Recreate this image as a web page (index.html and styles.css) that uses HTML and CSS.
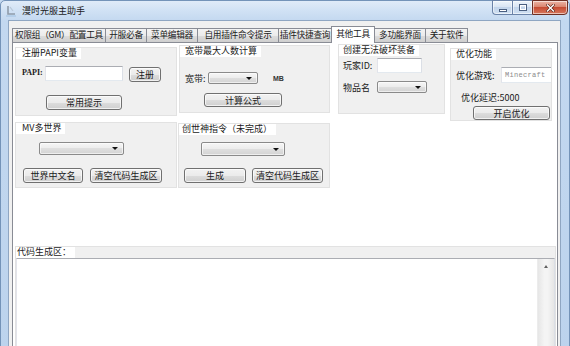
FILE: index.html
```html
<!DOCTYPE html>
<html>
<head>
<meta charset="utf-8">
<title>漫时光服主助手</title>
<link rel="stylesheet" href="styles.css">
</head>
<body>
<div class="window">
  <div class="titlebar">
    <svg class="app-icon" width="12" height="13" viewBox="0 0 12 13">
      <path d="M3 2 L3 10 L10 10" fill="none" stroke="#8f9cab" stroke-width="1.6"/>
      <path d="M5 3 L8 7" stroke="#b9c8d8" stroke-width="1.2"/>
      <path d="M1 12 H11" stroke="#9fc0e2" stroke-width="1"/>
    </svg>
    <span class="title">漫时光服主助手</span>
    <div class="caption">
      <div class="cbtn min"><span class="ico-min"></span></div>
      <div class="cbtn max"><span class="ico-max"></span></div>
      <div class="cbtn close">
        <svg width="9" height="8" viewBox="0 0 9 8">
          <path d="M1.5 1 L7.5 7 M7.5 1 L1.5 7" stroke="#5a2418" stroke-width="2.6" stroke-linecap="square"/>
          <path d="M1.5 1 L7.5 7 M7.5 1 L1.5 7" stroke="#ffffff" stroke-width="1.4" stroke-linecap="square"/>
        </svg>
      </div>
    </div>
  </div>
  <div class="client">
    <div class="tabs">
      <div class="tab t1">权限组（GM）配置工具</div>
      <div class="tab t2">开服必备</div>
      <div class="tab t3">菜单编辑器</div>
      <div class="tab t4">自用插件命令提示</div>
      <div class="tab t5">插件快捷查询</div>
      <div class="tab t6 sel">其他工具</div>
      <div class="tab t7">多功能界面</div>
      <div class="tab t8">关于软件</div>
    </div>
    <div class="page">
      <div class="row row1">
        <div class="gb gb1">
          <div class="gb-title">注册PAPI变量</div>
          <div class="line l-papi">
            <span class="lbl lbl-papi">PAPI:</span>
            <div class="input in-papi"></div>
            <div class="btn b-reg">注册</div>
          </div>
          <div class="line l-tips">
            <div class="btn b-tips">常用提示</div>
          </div>
        </div>
        <div class="gb gb2">
          <div class="gb-title">宽带最大人数计算</div>
          <div class="line l-bw">
            <span class="lbl lbl-bw">宽带:</span>
            <div class="combo cb-bw"></div>
            <span class="unit">MB</span>
          </div>
          <div class="line l-calc">
            <div class="btn b-calc">计算公式</div>
          </div>
        </div>
        <div class="gb gb3">
          <div class="gb-title">创建无法破坏装备</div>
          <div class="line l-pid">
            <span class="lbl lbl-w34">玩家ID:</span>
            <div class="input in-pid"></div>
          </div>
          <div class="line l-item">
            <span class="lbl lbl-w34">物品名</span>
            <div class="combo cb-item"></div>
          </div>
        </div>
        <div class="gb gb4">
          <div class="gb-title">优化功能</div>
          <div class="line l-game">
            <span class="lbl lbl-game">优化游戏:</span>
            <div class="input in-game"><span class="ph">Minecraft</span></div>
          </div>
          <div class="line l-delay">优化延迟:5000</div>
          <div class="line l-opt">
            <div class="btn b-opt">开启优化</div>
          </div>
        </div>
      </div>
      <div class="row row2">
        <div class="gb gb5">
          <div class="gb-title">MV多世界</div>
          <div class="line l-mvsel">
            <div class="combo cb-mv"></div>
          </div>
          <div class="line l-mvbtn">
            <div class="btn b-cn">世界中文名</div>
            <div class="btn b-clr1">清空代码生成区</div>
          </div>
        </div>
        <div class="gb gb6">
          <div class="gb-title">创世神指令（未完成）</div>
          <div class="line l-wesel">
            <div class="combo cb-we"></div>
          </div>
          <div class="line l-webtn">
            <div class="btn b-gen">生成</div>
            <div class="btn b-clr2">清空代码生成区</div>
          </div>
        </div>
      </div>
      <div class="gb code-box">
        <div class="gb-title">代码生成区：</div>
        <div class="code-area">
          <div class="code-text"></div>
          <div class="vscroll">
            <div class="sb-up"><span class="arrow-up"></span></div>
            <div class="sb-track"></div>
          </div>
        </div>
      </div>
    </div>
  </div>
</div>
</body>
</html>
```
FILE: styles.css
```css
* {
  box-sizing: border-box;
  margin: 0;
  padding: 0;
}

html, body {
  width: 570px;
  height: 346px;
  overflow: hidden;
}

body {
  font-family: "Noto Sans CJK SC", "Liberation Sans", sans-serif;
  font-size: 9px;
  color: #1a1a1a;
  background: #c5d9f0;
}

.window {
  width: 570px;
  height: 362px;
  display: flex;
  flex-direction: column;
  background: linear-gradient(180deg, #e0ebf8 0, #d0e1f4 10px, #c3d8f0 20px, #bcd3ed 100%);
  border: 1px solid #7493b8;
  border-radius: 5px 5px 0 0;
}

/* ---------- title bar ---------- */
.titlebar {
  height: 19px;
  flex: none;
  display: flex;
  align-items: center;
}

.app-icon {
  flex: none;
  margin-left: 4px;
}

.title {
  margin-left: 5px;
  font-size: 9px;
  line-height: 1;
  color: #1b1b1b;
  margin-top: -1px;
}

.caption {
  margin-left: auto;
  margin-right: 1px;
  margin-top: -1px;
  align-self: flex-start;
  display: flex;
  height: 15px;
}

.cbtn {
  height: 15px;
  border: 1px solid #6b83a8;
  display: flex;
  align-items: center;
  justify-content: center;
  background: linear-gradient(180deg, #eef4fb 0, #d9e5f3 45%, #c3d5eb 50%, #d0e0f2 100%);
  box-shadow: inset 0 0 0 1px rgba(255, 255, 255, 0.55);
}

.cbtn.min {
  width: 20px;
  border-right: none;
  border-radius: 0 0 0 4px;
}

.cbtn.max {
  width: 20px;
  border-right: none;
}

.cbtn.close {
  width: 36px;
  border-color: #6d2f24;
  border-radius: 0 0 4px 0;
  background: linear-gradient(180deg, #ecb5a6 0, #da856f 45%, #c64c33 50%, #d6785e 100%);
}

.ico-min {
  width: 8px;
  height: 3px;
  margin-top: 5px;
  background: #fff;
  border: 1px solid #4a5f80;
}

.ico-max {
  width: 8px;
  height: 7px;
  border: 1px solid #4a5f80;
  box-shadow: inset 0 0 0 1px #fff;
  background: transparent;
}

/* ---------- client & tabs ---------- */
.client {
  flex: 1;
  margin: 0 8px 0 7px;
  background: #f0f0f0;
  border: 1px solid #8fa6c2;
  padding: 5px 2px 0 3px;
  display: flex;
  flex-direction: column;
}

.tabs {
  height: 16px;
  flex: none;
  display: flex;
  align-items: flex-end;
  position: relative;
  z-index: 1;
}

.tab {
  height: 14px;
  margin-right: -1px;
  border: 1px solid #898c95;
  border-bottom: none;
  background: linear-gradient(180deg, #f3f3f3 0, #ebebeb 50%, #dddddd 50%, #cfcfcf 100%);
  display: flex;
  align-items: center;
  justify-content: center;
  white-space: nowrap;
  line-height: 1;
  font-size: 8.7px;
  letter-spacing: -0.3px;
}

.tab.sel {
  height: 17px;
  margin-bottom: -1px;
  background: #fff;
  position: relative;
  z-index: 2;
  padding-bottom: 1px;
}

.t1 { width: 94px; }
.t2 { width: 42px; }
.t3 { width: 52px; }
.t4 { width: 82px; }
.t5 { width: 54px; }
.t6 { width: 44px; }
.t7 { width: 52px; }
.t8 { width: 43px; }

.page {
  flex: 1;
  border: 1px solid #898c95;
  background: #fff;
  display: flex;
  flex-direction: column;
}

/* ---------- group boxes ---------- */
.row {
  display: flex;
  align-items: flex-start;
  flex: none;
}

.gb {
  background: #f0f0f0;
  border: 1px solid #e2e2e2;
  flex: none;
  display: flex;
  flex-direction: column;
  overflow: hidden;
}

.gb-title {
  align-self: flex-start;
  height: 12px;
  line-height: 12px;
  margin: -1px 0 0 -1px;
  padding: 0 4px 0 7px;
  background: #fff;
  white-space: nowrap;
}

.line {
  display: flex;
  align-items: center;
  flex: none;
  white-space: nowrap;
}

.lbl {
  flex: none;
  line-height: 1;
}

.btn {
  flex: none;
  border: 1px solid #707070;
  border-radius: 3px;
  background: linear-gradient(180deg, #f2f2f2 0, #ebebeb 50%, #dddddd 50%, #cfcfcf 100%);
  box-shadow: inset 0 0 0 1px rgba(255, 255, 255, 0.7);
  display: flex;
  align-items: center;
  justify-content: center;
  line-height: 1;
  height: 15px;
}

.input {
  flex: none;
  background: #fff;
  border: 1px solid;
  border-color: #abadb3 #dbdfe6 #e3e9ef #e2e3ea;
  height: 15px;
}

.combo {
  flex: none;
  border: 1px solid #8a8a8a;
  border-radius: 2px;
  background: linear-gradient(180deg, #f6f6f6 0, #ececec 50%, #dfdfdf 50%, #d3d3d3 100%);
  box-shadow: inset 0 0 0 1px rgba(255, 255, 255, 0.6);
  display: flex;
  justify-content: flex-end;
  align-items: center;
  padding-right: 5px;
}

.combo::after {
  content: "";
  width: 0;
  height: 0;
  border-left: 3px solid transparent;
  border-right: 3px solid transparent;
  border-top: 3px solid #111;
}

/* group 1 */
.gb1 { width: 162px; height: 69px; margin: 4px 0 0 2px; }
.gb1 .line { padding-left: 6px; }
.l-papi { margin-top: 7px; align-items: flex-start !important; }
.lbl-papi {
  width: 23px;
  margin-top: 3px;
  font-family: "Liberation Serif", serif;
  font-weight: bold;
  font-size: 8px;
}
.in-papi { width: 78px; }
.b-reg { width: 32px; margin-left: 6px; margin-top: 1px; }
.l-tips { margin-top: 13px; }
.b-tips { width: 76px; margin-left: 24px; }

/* group 2 */
.gb2 { width: 151px; height: 68px; margin: 2px 0 0 2px; }
.gb2 .gb-title { padding-left: 6px; }
.gb2 .line { padding-left: 5px; }
.l-bw { margin-top: 15px; }
.lbl-bw { width: 23px; }
.cb-bw { width: 50px; height: 12px; }
.unit {
  margin-left: 15px;
  font-size: 7px;
  font-weight: bold;
  color: #333;
  font-family: "Liberation Sans", sans-serif;
}
.l-calc { margin-top: 9px; }
.b-calc { width: 78px; height: 14px; margin-left: 19px; }

/* group 3 */
.gb3 { width: 107px; height: 70px; margin: 1px 0 0 8px; }
.gb3 .gb-title { padding-left: 5px; }
.gb3 .line { padding-left: 4px; }
.l-pid { margin-top: 2px; }
.lbl-w34 { width: 34px; }
.in-pid { width: 45px; }
.l-item { margin-top: 8px; }
.cb-item { width: 50px; height: 12px; }

/* group 4 */
.gb4 { width: 102px; height: 73px; margin: 5px 0 0 5px; }
.gb4 .gb-title { padding-left: 6px; }
.gb4 .line { padding-left: 5px; }
.l-game { margin-top: 7px; }
.lbl-game { width: 45px; }
.in-game {
  width: 64px;
  height: 16px;
  display: flex;
  align-items: center;
  padding-left: 3px;
}
.ph {
  font-family: "Liberation Mono", monospace;
  font-size: 7px;
  color: #8c8c8c;
  letter-spacing: 0.3px;
}
.l-delay {
  margin-top: 8px;
  height: 12px;
  padding-left: 10px !important;
}
.l-opt { margin-top: 3px; }
.b-opt { width: 77px; height: 14px; margin-left: 17px; }

/* group 5 */
.gb5 { width: 162px; height: 66px; margin: 1px 0 0 2px; }
.gb5 .line { padding-left: 6px; }
.l-mvsel { margin-top: 8px; }
.cb-mv { width: 85px; height: 13px; margin-left: 17px; }
.l-mvbtn { margin-top: 13px; }
.b-cn { width: 60px; margin-left: 1px; }
.b-clr1 { width: 72px; margin-left: 7px; }

/* group 6 */
.gb6 { width: 152px; height: 65px; margin: 2px 0 0 1px; }
.gb6 .gb-title { padding-left: 4px; }
.gb6 .line { padding-left: 3px; }
.l-wesel { margin-top: 7px; }
.cb-we { width: 84px; height: 14px; margin-left: 19px; }
.l-webtn { margin-top: 12px; }
.b-gen { width: 62px; margin-left: 2px; }
.b-clr2 { width: 71px; margin-left: 6px; }

/* code area */
.code-box {
  width: 541px;
  margin: 58px 0 0 2px;
  flex: 1;
  overflow: hidden;
}
.code-box .gb-title {
  padding-left: 2px;
}
.code-area {
  flex: 1;
  display: flex;
  border: 1px solid;
  border-color: #abadb3 #dbdfe6 #e3e9ef #e2e3ea;
  background: #fff;
}
.code-text {
  flex: 1;
}
.vscroll {
  width: 17px;
  flex: none;
  display: flex;
  flex-direction: column;
  background: linear-gradient(90deg, #e6e6e6 0, #f4f4f4 40%, #f4f4f4 60%, #e6e6e6 100%);
  border-left: 1px solid #ececec;
}
.sb-up {
  height: 15px;
  display: flex;
  align-items: center;
  justify-content: center;
}
.arrow-up {
  width: 0;
  height: 0;
  border-left: 2.5px solid transparent;
  border-right: 2.5px solid transparent;
  border-bottom: 3px solid #606060;
}
.sb-track {
  flex: 1;
}
```
